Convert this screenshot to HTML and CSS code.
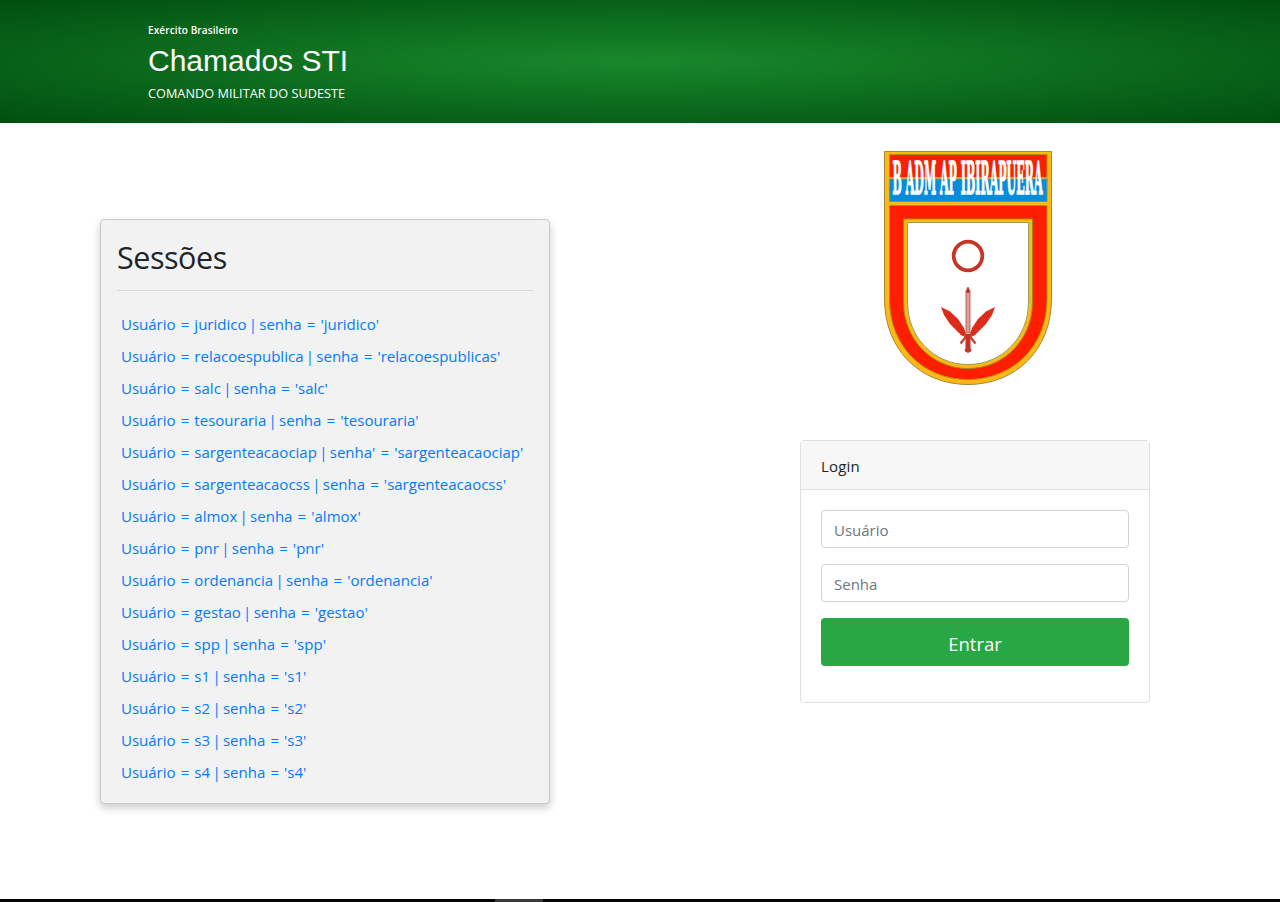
FILE: index.html
```html
<!DOCTYPE html>
<html lang="pt-BR">
<head>
<meta charset="utf-8">
<title>Chamados STI</title>
<link rel="stylesheet" href="styles.css">
</head>
<body>
<header class="banner">
  <div class="banner-org">Exército Brasileiro</div>
  <h1 class="banner-title">Chamados STI</h1>
  <div class="banner-unit">COMANDO MILITAR DO SUDESTE</div>
</header>
<main class="content">
  <section class="sessions">
    <h2 class="sessions-title">Sessões</h2>
    <ul class="sessions-list">
      <li>Usuário <i>=</i> juridico <b>|</b> senha <i>=</i> 'juridico'</li>
      <li>Usuário <i>=</i> relacoespublica <b>|</b> senha <i>=</i> 'relacoespublicas'</li>
      <li>Usuário <i>=</i> salc <b>|</b> senha <i>=</i> 'salc'</li>
      <li>Usuário <i>=</i> tesouraria <b>|</b> senha <i>=</i> 'tesouraria'</li>
      <li>Usuário <i>=</i> sargenteacaociap <b>|</b> senha' <i>=</i> 'sargenteacaociap'</li>
      <li>Usuário <i>=</i> sargenteacaocss <b>|</b> senha <i>=</i> 'sargenteacaocss'</li>
      <li>Usuário <i>=</i> almox <b>|</b> senha <i>=</i> 'almox'</li>
      <li>Usuário <i>=</i> pnr <b>|</b> senha <i>=</i> 'pnr'</li>
      <li>Usuário <i>=</i> ordenancia <b>|</b> senha <i>=</i> 'ordenancia'</li>
      <li>Usuário <i>=</i> gestao <b>|</b> senha <i>=</i> 'gestao'</li>
      <li>Usuário <i>=</i> spp <b>|</b> senha <i>=</i> 'spp'</li>
      <li>Usuário <i>=</i> s1 <b>|</b> senha <i>=</i> 's1'</li>
      <li>Usuário <i>=</i> s2 <b>|</b> senha <i>=</i> 's2'</li>
      <li>Usuário <i>=</i> s3 <b>|</b> senha <i>=</i> 's3'</li>
      <li>Usuário <i>=</i> s4 <b>|</b> senha <i>=</i> 's4'</li>
    </ul>
  </section>
  <aside class="access">
    <svg class="crest" viewBox="880 148 176 240" role="img" aria-label="B ADM AP IBIRAPUERA">
      <path d="M884.5 151.5h167V299c0 51-36 85.500-83.500 85.500S884.500 350 884.500 299z" fill="#fdb913" stroke="#a58a3c"/>
      <path d="M889.500 205.500h157.500V299c0 47-34 80.500-79 80.500S889.500 346 889.500 299z" fill="#ff1e00" stroke="#b98a10"/>
      <path d="M889.500 154.500h157.500v27h-157.500z" fill="#f82108" stroke="#b98a10"/>
      <path d="M889.500 179h157.500v22.500h-157.500z" fill="#078bdb" stroke="#6f9a74"/>
      <path d="M889 178h158.500" stroke="#d5b850" stroke-width="1.500"/>
      <path d="M903.500 219h129V302c0 37-28 66.500-64.500 66.500S903.500 339 903.500 302z" fill="#fbb916" stroke="#a68918"/>
      <path d="M907.500 222.500h121V302c0 35-26 62.500-60.500 62.500S907.500 337 907.500 302z" fill="#fff" stroke="#9b9a68"/>
      <g transform="translate(892.500 194) scale(1 4)">
        <text class="crest-text" x="0" y="0" textLength="150" lengthAdjust="spacingAndGlyphs">B ADM AP IBIRAPUERA</text>
      </g>
      <circle cx="968" cy="256" r="14.300" fill="#fff" stroke="#c93325" stroke-width="3.700"/>
      <path d="M941 307l9 4.500 8 7.500 6 9 2 6-1 3-6-4-9-9-6-9z" fill="#dc2b1a"/>
      <path d="M995 307l-9 4.500-8 7.500-6 9-2 6 1 3 6-4 9-9 6-9z" fill="#dc2b1a"/>
      <path d="M966 333V291l2-4 2 4v42z" fill="#dba09a" stroke="#b9473c" stroke-width=".8"/>
      <path d="M966.500 291l1.500-4 1.500 4v2h-3z" fill="#bd3025"/>
      <path d="M960.500 334l6 2-6 7.500M975.500 334l-6 2 6 7.500" fill="none" stroke="#cf3a2c" stroke-width="2.200"/>
      <path d="M965.500 334h5v14l1 3-3.500 2-3.500-2 1-3z" fill="#c93226"/>
    </svg>
    <form class="login">
      <div class="login-head">Login</div>
      <div class="login-body">
        <input class="field" type="text" placeholder="Usuário">
        <input class="field" type="password" placeholder="Senha">
        <button class="submit" type="button">Entrar</button>
      </div>
    </form>
  </aside>
</main>
<footer class="taskbar"><div class="taskbar-item"></div></footer>
</body>
</html>
```
FILE: styles.css
```css
* { box-sizing: border-box; }
body {
  margin: 0;
  height: 902px;
  display: flex;
  flex-direction: column;
  overflow: hidden;
  background: #fff;
  color: #212529;
  font-family: "Open Sans", sans-serif;
  font-size: 15px;
}
.banner {
  height: 123px;
  padding: 22px 148px 0;
  color: #fff;
  background: radial-gradient(ellipse at center, #18882c 0%, #004f0f 100%);
}
.banner-org { font-size: 10px; line-height: 16px; font-weight: 600; letter-spacing: .12px; }
.banner-title {
  margin: 4px 0 0;
  font: 400 30px/38px "Liberation Sans", sans-serif;
}
.banner-unit { margin-top: 4px; font-size: 12.700px; line-height: 18px; letter-spacing: .03px; }
.content {
  flex: 1;
  display: flex;
  justify-content: space-between;
  align-items: flex-start;
  padding: 0 130px 0 100px;
}
.sessions {
  width: 450px;
  height: 585px;
  margin-top: 96px;
  padding: 16px;
  background: #f2f2f2;
  border: 1px solid #c8c8c8;
  border-radius: 4px;
  box-shadow: 0 4px 8px rgba(0, 0, 0, .2);
}
.sessions-title {
  margin: 0;
  padding: 2px 0 14px;
  border-bottom: 1px solid #d9d9d9;
  font-size: 30.500px;
  font-weight: 400;
  line-height: 38px;
  letter-spacing: -.45px;
}
.sessions-list {
  margin: 17px 0 0;
  padding: 0 4px;
  list-style: none;
  color: #007bff;
  line-height: 32px;
  white-space: nowrap;
}
.sessions-list i { display: inline-block; width: 11px; text-align: center; font-style: normal; }
.sessions-list b { margin: 0 -1.600px; font-weight: 400; }
.access {
  width: 350px;
  padding-top: 25px;
}
.crest { display: block; width: 176px; height: 240px; margin-left: 80px; overflow: visible; }
.crest-text {
  font: 700 11px "DejaVu Serif", serif;
  fill: #fff;
  stroke: #fff;
  stroke-width: .35px;
}
.login {
  height: 263px;
  margin-top: 52px;
  border: 1px solid #dfdfdf;
  border-radius: 4px;
}
.login-head {
  height: 49px;
  padding: 1px 20px 0;
  line-height: 48px;
  letter-spacing: .2px;
  background: #f7f7f7;
  border-bottom: 1px solid #dfdfdf;
}
.login-body { display: flex; flex-direction: column; gap: 16px; padding: 20px; }
.field {
  height: 38px;
  padding: 1px 12px 0;
  border: 1px solid #ced4da;
  border-radius: 4px;
  font: inherit;
}
.field::placeholder { color: #6c757d; opacity: 1; }
.submit {
  height: 48px;
  padding: 2px 0 0;
  border: 0;
  border-radius: 4px;
  background: #28a745;
  color: #fff;
  font: inherit;
  font-size: 18.500px;
}
.taskbar { height: 3px; padding-left: 495px; background: #050505; }
.taskbar-item { width: 48px; height: 3px; background: #3b3b3b; }
```
